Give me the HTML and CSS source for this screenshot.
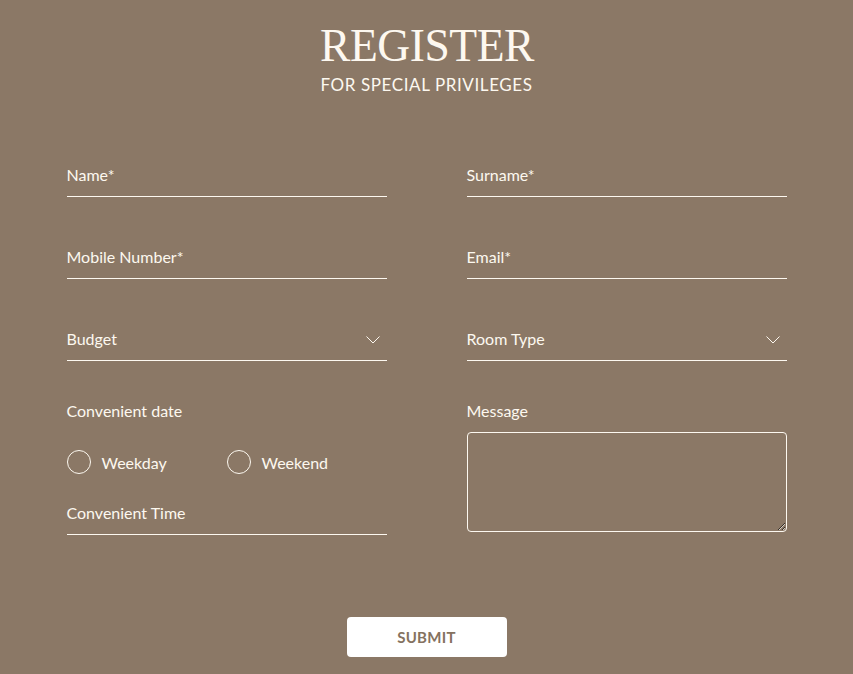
FILE: index.html
```html
<!DOCTYPE html>
<html lang="en">
<head>
    <meta charset="UTF-8">
    <meta name="viewport" content="width=device-width, initial-scale=1.0">
    <title>Register</title>
    <link rel="stylesheet" href="styles.css">
</head>
<body>
    <div class="register">
        <div class="heading">
            <h1>REGISTER</h1>
            <p>FOR SPECIAL PRIVILEGES</p>
        </div>
        <form class="form-grid">
            <div class="col">
                <div class="field"><span>Name*</span></div>
                <div class="field"><span>Mobile Number*</span></div>
                <div class="field select">
                    <span>Budget</span>
                    <svg width="14" height="8" viewBox="0 0 14 8"><path d="M0.5 0.5l6.5 6.5 6.5-6.5" fill="none" stroke="#fdf8f0" stroke-width="1"/></svg>
                </div>
                <div class="group-label">Convenient date</div>
                <div class="radios">
                    <label class="radio"><span class="circle"></span>Weekday</label>
                    <label class="radio"><span class="circle"></span>Weekend</label>
                </div>
                <div class="field time"><span>Convenient Time</span></div>
            </div>
            <div class="col">
                <div class="field"><span>Surname*</span></div>
                <div class="field"><span>Email*</span></div>
                <div class="field select">
                    <span>Room Type</span>
                    <svg width="14" height="8" viewBox="0 0 14 8"><path d="M0.5 0.5l6.5 6.5 6.5-6.5" fill="none" stroke="#fdf8f0" stroke-width="1"/></svg>
                </div>
                <div class="group-label">Message</div>
                <textarea class="message"></textarea>
            </div>
        </form>
        <div class="actions">
            <button type="button">SUBMIT</button>
        </div>
    </div>
</body>
</html>
```

FILE: styles.css
```css
body {
    margin: 0;
    background-color: #8b7866;
    font-family: "Lato", "Open Sans", sans-serif;
    color: #fdf8f0;
}
.register {
    width: 720px;
    margin: 0 auto;
    padding-top: 18px;
}
.heading {
    text-align: center;
}
.heading h1 {
    margin: 0;
    font-family: "Liberation Serif", "DejaVu Serif", serif;
    font-weight: normal;
    font-size: 47px;
    line-height: 54px;
    letter-spacing: -0.5px;
    transform: scaleX(0.97);
}
.heading p {
    margin: 3px 0 0;
    font-size: 17px;
    line-height: 20px;
    letter-spacing: 0.6px;
}
.form-grid {
    display: grid;
    grid-template-columns: 320px 320px;
    column-gap: 80px;
    margin-top: 57px;
}
.col {
    display: flex;
    flex-direction: column;
}
.field {
    display: flex;
    justify-content: space-between;
    align-items: center;
    height: 44px;
    border-bottom: 1px solid #fdf8f0;
    margin-bottom: 37px;
    font-size: 16px;
}
.field svg {
    align-self: flex-end;
    margin: 0 7px 16px 0;
}
.group-label {
    font-size: 16px;
    line-height: 20px;
    margin-top: 3px;
}
.radios {
    display: flex;
    margin-top: 29px;
}
.radio {
    display: flex;
    align-items: center;
    width: 160px;
    font-size: 16px;
}
.circle {
    width: 22px;
    height: 22px;
    border: 1px solid #fdf8f0;
    border-radius: 50%;
    margin-right: 11px;
}
.field.time {
    margin-top: 16px;
    margin-bottom: 0;
}
.message {
    margin-top: 11px;
    height: 98px;
    border: 1px solid #fdf8f0;
    border-radius: 4px;
    background: transparent;
    padding: 0;
}
.actions {
    display: flex;
    justify-content: center;
    margin-top: 82px;
}
.actions button {
    width: 160px;
    height: 40px;
    background: #fff;
    border: none;
    border-radius: 4px;
    color: #857260;
    font-family: "Lato", sans-serif;
    font-weight: bold;
    font-size: 15px;
    letter-spacing: 0.3px;
}
```
